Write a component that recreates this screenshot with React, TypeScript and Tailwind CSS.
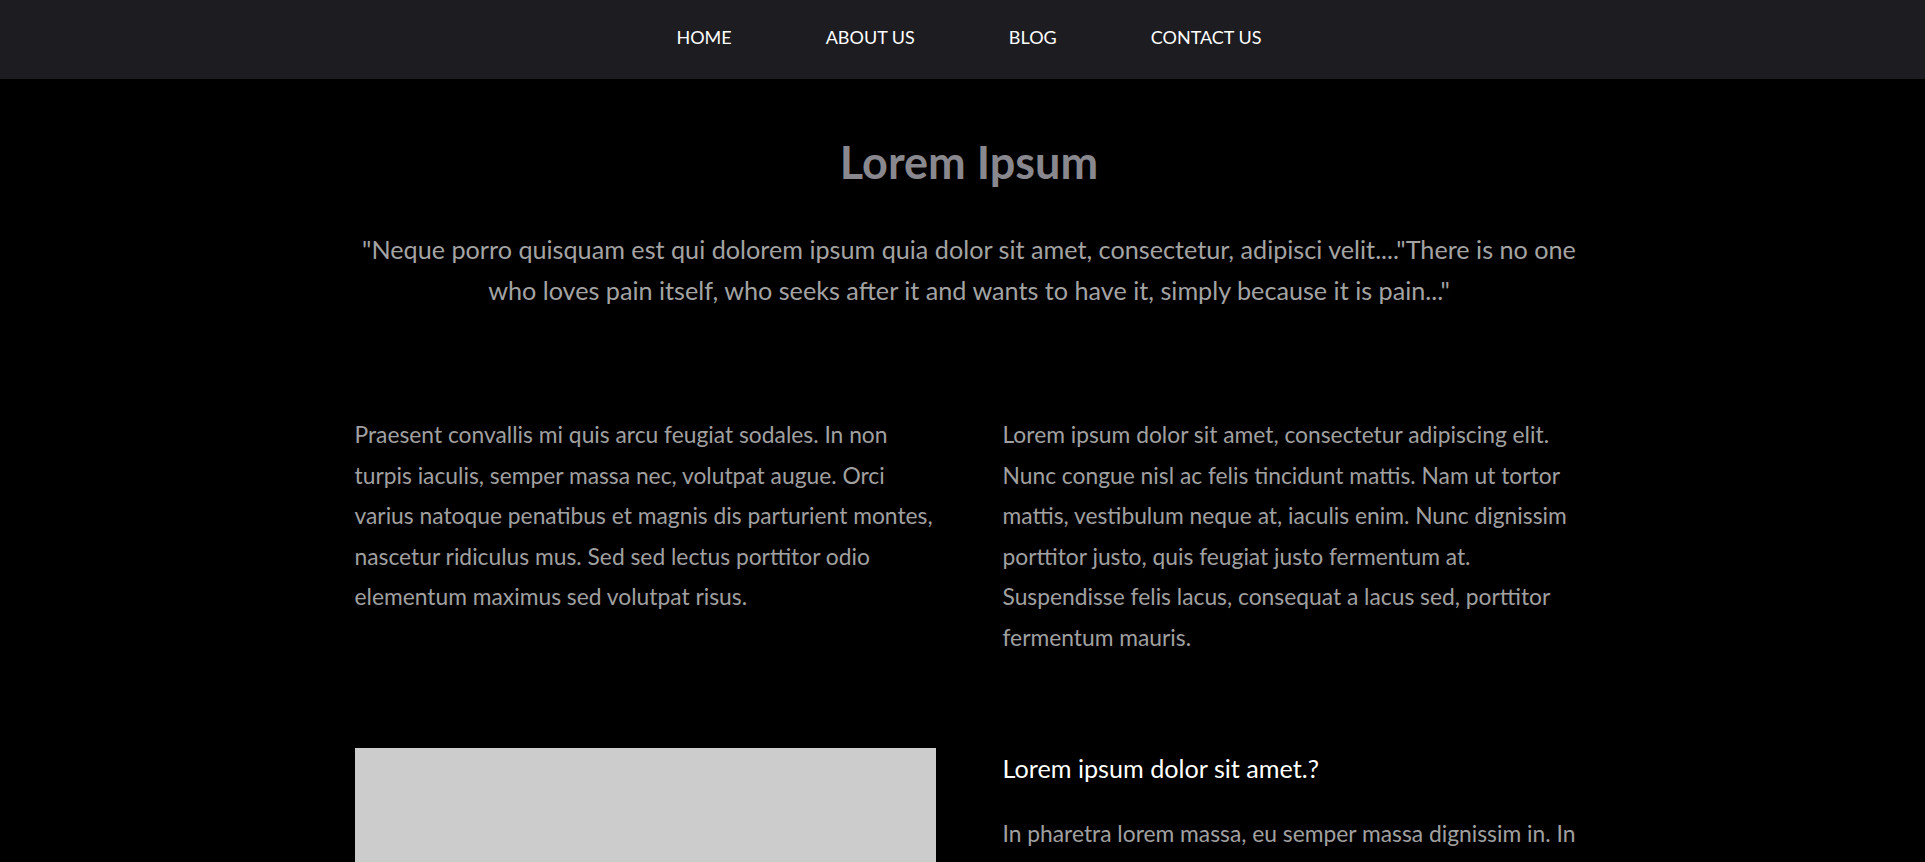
import React from 'react';

const NAV_LINKS = ['HOME', 'ABOUT US', 'BLOG', 'CONTACT US'];

const App: React.FC = () => {
  return (
    <div className="min-h-screen bg-black font-['Lato','Noto_Sans',sans-serif]">
      {/* top navigation */}
      <header className="bg-[#1c1c21] pl-[13px]">
        <nav className="mx-auto flex h-[79px] items-center justify-center gap-[94px] pb-[6px]">
          {NAV_LINKS.map((link) => (
            <a key={link} href="#" className="text-[18px] leading-[22px] text-white">
              {link}
            </a>
          ))}
        </nav>
      </header>

      <main className="pl-[13px]">
        <div className="mx-auto w-[1229px]">
          {/* intro */}
          <section className="pt-[57px] text-center">
            <h1 className="text-[45px] font-bold leading-[53px] text-[#88888e]">Lorem Ipsum</h1>
            <p className="mt-[40px] text-[25.2px] leading-[40.5px] text-[#a3a3a3]">
              "Neque porro quisquam est qui dolorem ipsum quia dolor sit amet, consectetur, adipisci velit...."There is no one
              who loves pain itself, who seeks after it and wants to have it, simply because it is pain..."
            </p>
          </section>

          {/* two text columns */}
          <section className="mt-[104px] grid grid-cols-2 gap-x-[67px] text-[22.8px] leading-[40.5px] text-[#a0a0a0]">
            <p>
              Praesent convallis mi quis arcu feugiat sodales. In non turpis iaculis, semper massa nec, volutpat augue. Orci
              varius natoque penatibus et magnis dis parturient montes, nascetur ridiculus mus. Sed sed lectus porttitor odio
              elementum maximus sed volutpat risus.
            </p>
            <p>
              Lorem ipsum dolor sit amet, consectetur adipiscing elit. Nunc congue nisl ac felis tincidunt mattis. Nam ut tortor
              mattis, vestibulum neque at, iaculis enim. Nunc dignissim porttitor justo, quis feugiat justo fermentum at.
              Suspendisse felis lacus, consequat a lacus sed, porttitor fermentum mauris.
            </p>
          </section>

          {/* image + faq */}
          <section className="mt-[91px] grid grid-cols-2 gap-x-[67px] pb-[80px]">
            <div className="h-[380px] bg-[#cccccc]" />
            <div>
              <h3 className="mt-[5px] text-[25.2px] leading-[30px] text-white">Lorem ipsum dolor sit amet.?</h3>
              <p className="mt-[30px] text-[22.8px] leading-[40.5px] text-[#a0a0a0]">
                In pharetra lorem massa, eu semper massa dignissim in. In hac habitasse platea dictumst. Vivamus vel nibh
                vitae nunc placerat consequat.
              </p>
            </div>
          </section>
        </div>
      </main>
    </div>
  );
};

export default App;
